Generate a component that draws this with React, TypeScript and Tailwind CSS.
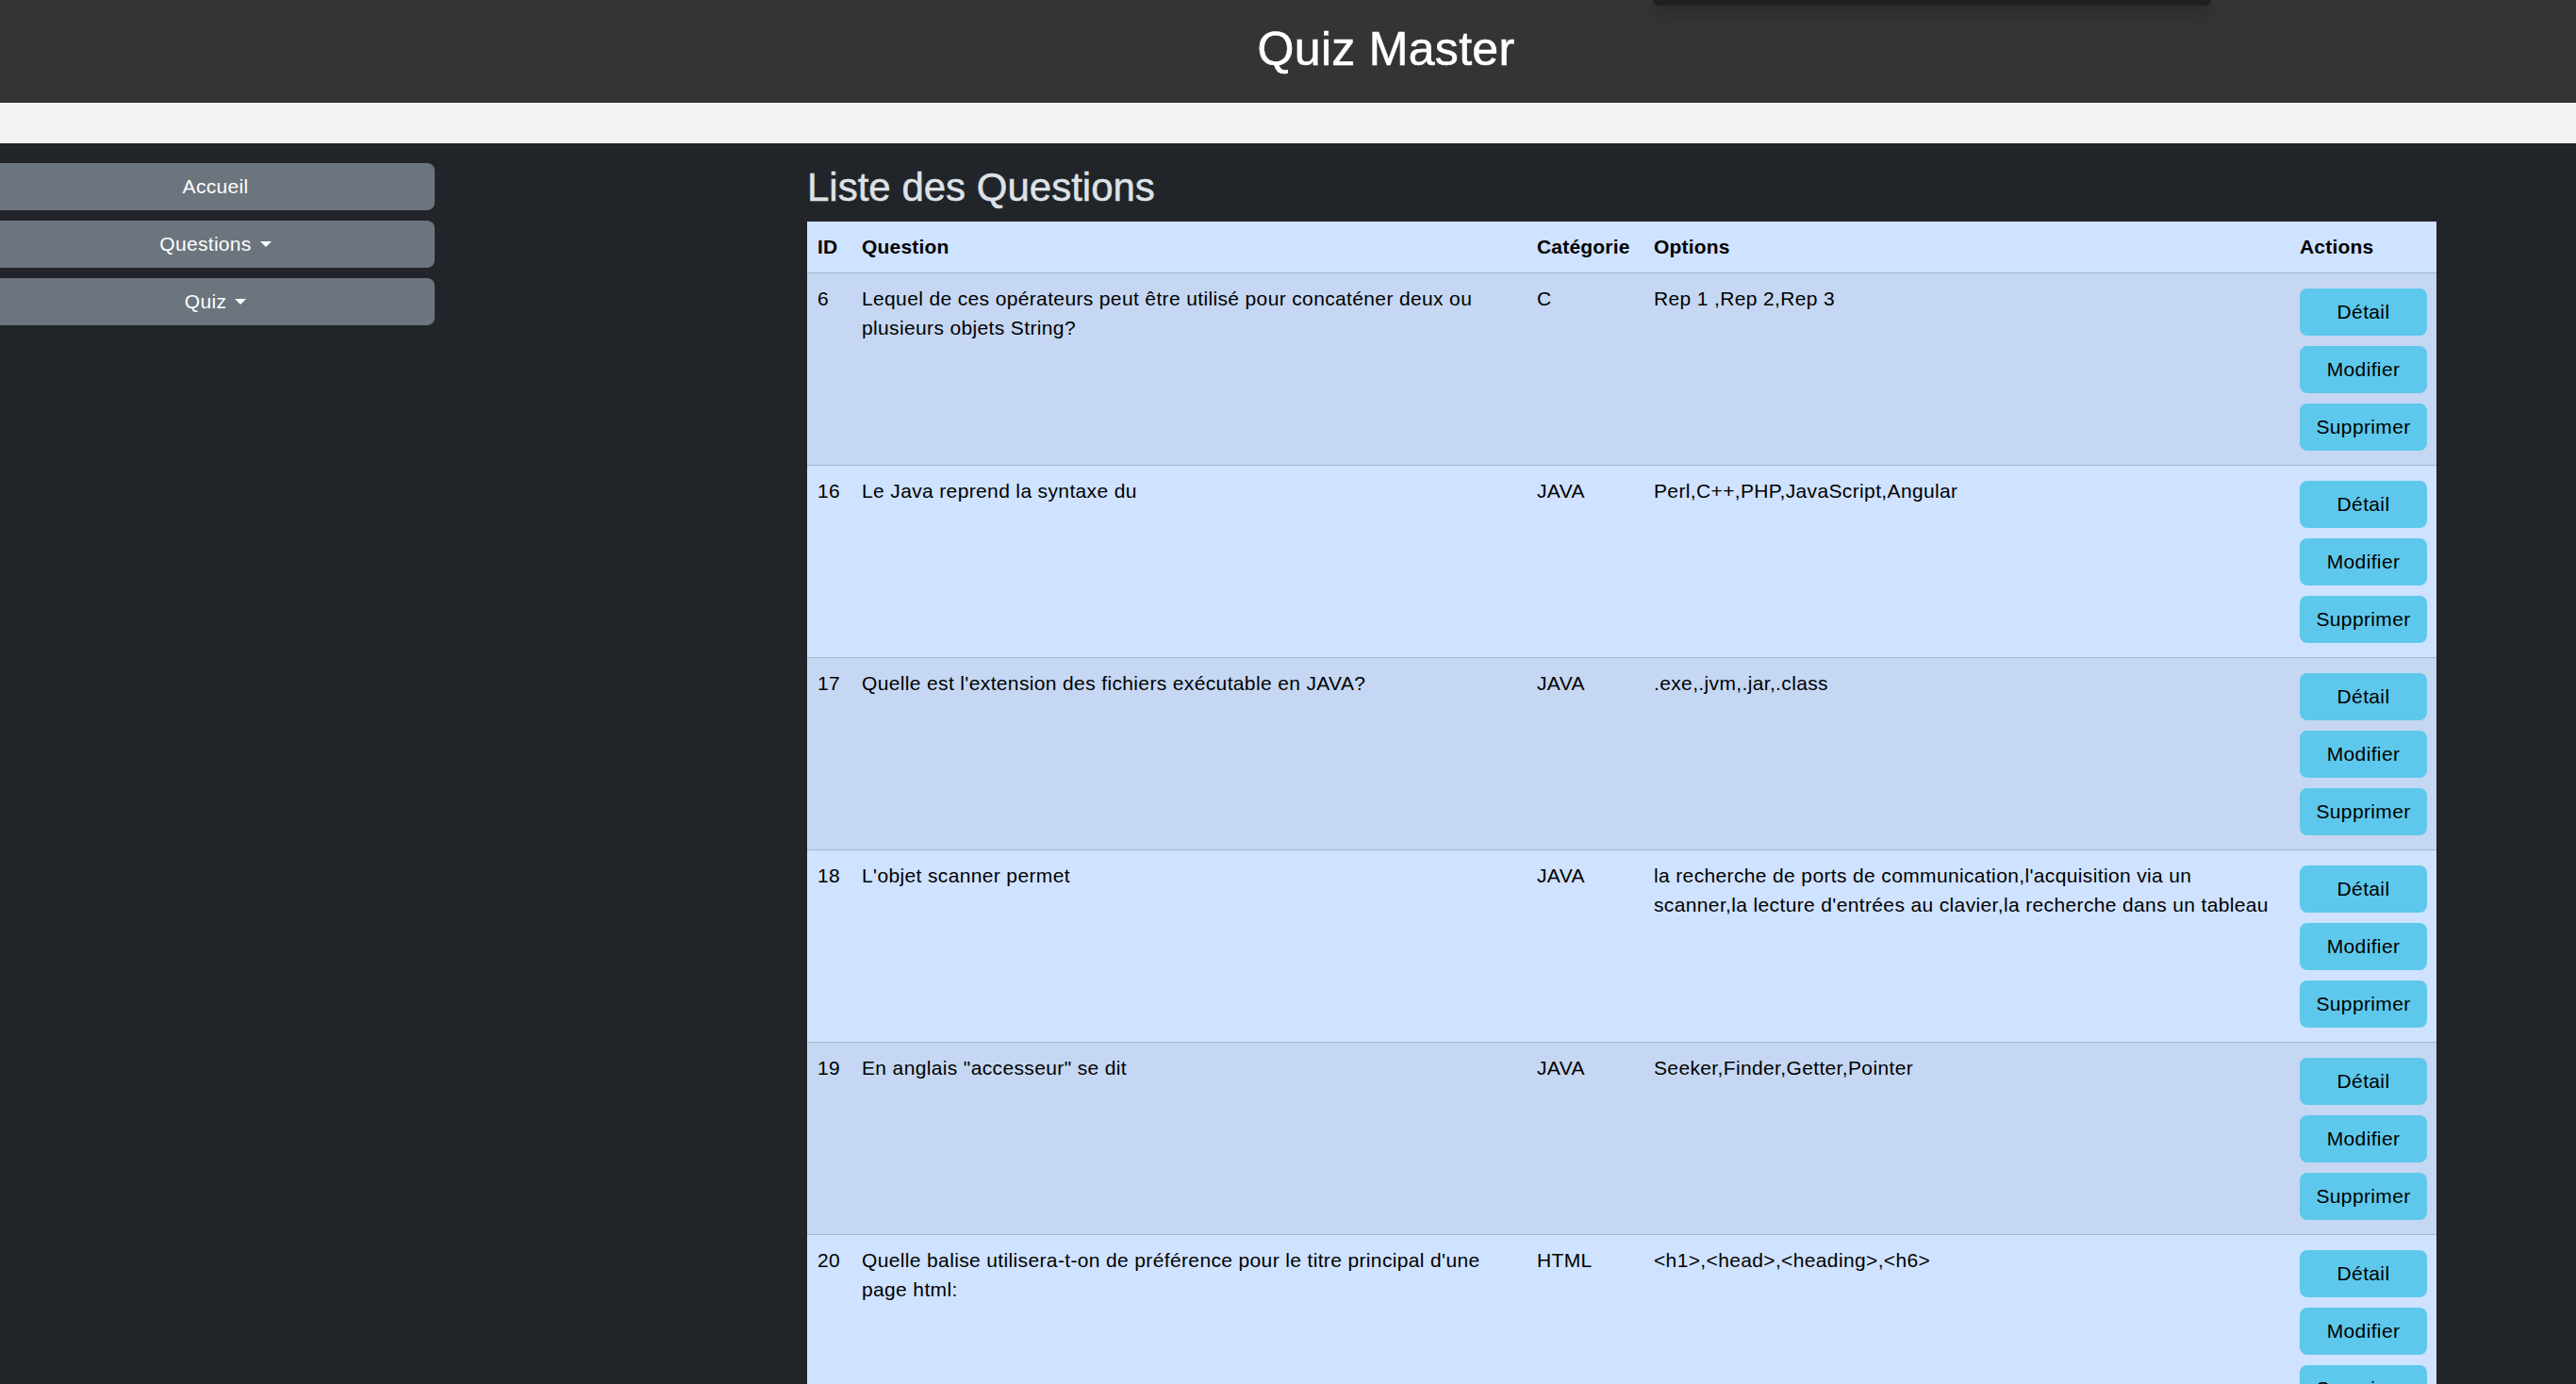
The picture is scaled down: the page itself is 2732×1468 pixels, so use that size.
import { useState } from "react";

type Question = {
  id: number;
  question: string;
  categorie: string;
  options: string;
};

const questions: Question[] = [
  {
    id: 6,
    question:
      "Lequel de ces opérateurs peut être utilisé pour concaténer deux ou plusieurs objets String?",
    categorie: "C",
    options: "Rep 1 ,Rep 2,Rep 3",
  },
  { id: 16, question: "Le Java reprend la syntaxe du", categorie: "JAVA", options: "Perl,C++,PHP,JavaScript,Angular" },
  {
    id: 17,
    question: "Quelle est l'extension des fichiers exécutable en JAVA?",
    categorie: "JAVA",
    options: ".exe,.jvm,.jar,.class",
  },
  {
    id: 18,
    question: "L'objet scanner permet",
    categorie: "JAVA",
    options:
      "la recherche de ports de communication,l'acquisition via un scanner,la lecture d'entrées au clavier,la recherche dans un tableau",
  },
  { id: 19, question: 'En anglais "accesseur" se dit', categorie: "JAVA", options: "Seeker,Finder,Getter,Pointer" },
  {
    id: 20,
    question: "Quelle balise utilisera-t-on de préférence pour le titre principal d'une page html:",
    categorie: "HTML",
    options: "<h1>,<head>,<heading>,<h6>",
  },
  { id: 21, question: "Que signifie CSS?", categorie: "HTML", options: "Cascading Style Sheets,Computer Style Sheets" },
];

function Caret() {
  return (
    <span className="inline-block ml-[9px] align-[4px] border-t-[6px] border-x-[6px] border-b-0 border-t-white border-x-transparent" />
  );
}

function SideButton({ label, caret }: { label: string; caret?: boolean }) {
  return (
    <button className="w-full h-[50px] bg-[#6c757d] text-white text-[21px] tracking-[0.3px] rounded-r-lg flex items-center justify-center pr-[4px]">
      {label}
      {caret && <Caret />}
    </button>
  );
}

export default function App() {
  const [selected, setSelected] = useState<number | null>(null);

  return (
    <div className="min-h-screen bg-[#212529] font-['Liberation_Sans',Arial,sans-serif] text-black">
      {/* en-tête */}
      <header className="relative h-[109px] bg-[#343434] flex items-center justify-center pl-[208px]">
        <div className="absolute left-[1753px] top-0 w-[592px] h-[6px] bg-[#202020] rounded-b-xl shadow-[0_4px_16px_rgba(0,0,0,0.45)]" />
        <h1 className="text-[50px] text-white leading-none pb-[6px] tracking-[0.3px] [-webkit-text-stroke:0.6px_white]">
          Quiz Master
        </h1>
      </header>
      <div className="h-[43px] bg-[#f3f3f3]" />

      <div className="flex">
        <nav className="w-[461px] shrink-0 pt-[21px] flex flex-col gap-[11px]">
          <SideButton label="Accueil" />
          <SideButton label="Questions" caret />
          <SideButton label="Quiz" caret />
        </nav>

        <main className="ml-[395px] w-[1728px] pt-[23px]">
          <h2 className="text-[42px] leading-[48px] text-[#dee2e6] mb-[12px] [-webkit-text-stroke:0.5px_#dee2e6]">
            Liste des Questions
          </h2>
          <table className="w-full table-fixed border-collapse text-[21px] leading-[31.5px] tracking-[0.36px]">
            <colgroup>
              <col className="w-[47px]" />
              <col className="w-[716px]" />
              <col className="w-[124px]" />
              <col className="w-[685px]" />
              <col className="w-[156px]" />
            </colgroup>
            <thead>
              <tr className="bg-[#cfe2ff] border-b border-[#a6b5cc] text-left">
                <th className="p-[11px] font-bold tracking-[0.2px]">ID</th>
                <th className="p-[11px] font-bold tracking-[0.2px]">Question</th>
                <th className="p-[11px] font-bold tracking-[0.2px]">Catégorie</th>
                <th className="p-[11px] font-bold tracking-[0.2px]">Options</th>
                <th className="p-[11px] font-bold tracking-[0.2px]">Actions</th>
              </tr>
            </thead>
            <tbody>
              {questions.map((q, i) => (
                <tr
                  key={q.id}
                  className={`${i % 2 === 0 ? "bg-[#c5d7f2]" : "bg-[#cfe2ff]"} border-b border-[#a6b5cc] align-top`}
                >
                  <td className="p-[11px]">{q.id}</td>
                  <td className="p-[11px]">{q.question}</td>
                  <td className="p-[11px]">{q.categorie}</td>
                  <td className="p-[11px]">{q.options}</td>
                  <td className="px-[11px] pt-[16px] pb-[15px]">
                    <div className="flex flex-col gap-[11px]">
                      {["Détail", "Modifier", "Supprimer"].map((a) => (
                        <button
                          key={a}
                          onClick={() => setSelected(selected === q.id ? null : q.id)}
                          className="w-[135px] h-[50px] bg-[#5dc8eb] rounded-lg text-[21px] text-black"
                        >
                          {a}
                        </button>
                      ))}
                    </div>
                  </td>
                </tr>
              ))}
            </tbody>
          </table>
        </main>
      </div>
    </div>
  );
}
